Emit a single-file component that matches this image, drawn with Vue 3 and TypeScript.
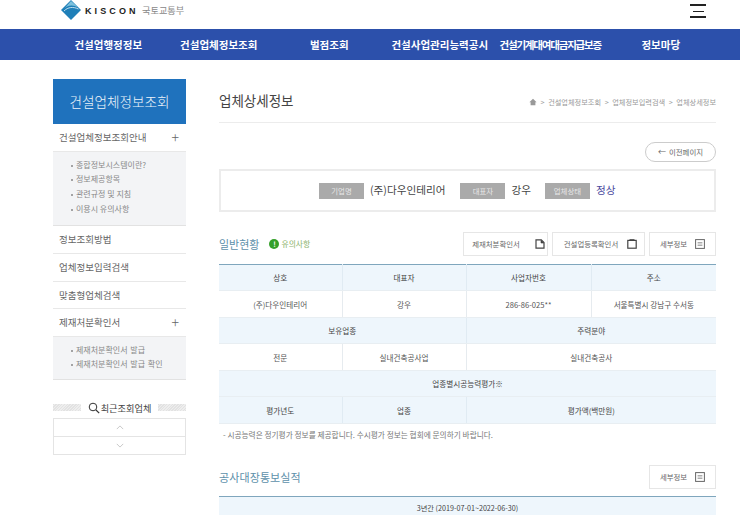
<script setup lang="ts">
const navItems: string[] = ['건설업행정정보', '건설업체정보조회', '벌점조회', '건설사업관리능력공시', '건설기계대여대금지급보증', '정보마당']
const guide: string[] = ['종합정보시스템이란?', '정보제공항목', '관련규정 및 지침', '이용시 유의사항']
const cert: string[] = ['제재처분확인서 발급', '제재처분확인서 발급 확인']
</script>

<template>
  <div class="page">
    <header class="top">
      <div class="brand">
        <svg class="logo" viewBox="0 0 20 20" width="20" height="20">
          <path d="M10 0 L20 10 L10 20 L0 10 Z" fill="#1f7fb8" />
          <path d="M2.5 9.5 C6 5 12 4 17 7.5 L14 4.5 L10 1 Z" fill="#7cc0dc" />
          <path d="M3 11 C7 7 12 6.5 17.5 9" stroke="#e8f5fa" stroke-width="0.8" fill="none" />
        </svg>
        <span class="kiscon">KISCON</span>
        <span class="ministry">국토교통부</span>
      </div>
      <div class="burger"><i></i><i class="short"></i><i></i></div>
    </header>

    <nav class="gnb">
      <a v-for="n in navItems" :key="n">{{ n }}</a>
    </nav>

    <div class="body">
      <aside class="side">
        <h2 class="side-title">건설업체정보조회</h2>
        <div class="m-row">건설업체정보조회안내<span class="plus">+</span></div>
        <ul class="sub sub1"><li v-for="g in guide" :key="g">{{ g }}</li></ul>
        <div class="m-row">정보조회방법</div>
        <div class="m-row">업체정보입력검색</div>
        <div class="m-row">맞춤형업체검색</div>
        <div class="m-row">제재처분확인서<span class="plus">+</span></div>
        <ul class="sub sub2"><li v-for="c in cert" :key="c">{{ c }}</li></ul>

        <div class="recent">
          <span class="hatch"></span>
          <svg viewBox="0 0 12 12" width="12" height="12" class="mag">
            <circle cx="5" cy="5" r="3.8" fill="none" stroke="#333" stroke-width="1" />
            <path d="M8 8 L11.2 11.2" stroke="#333" stroke-width="1.2" />
          </svg>
          <span class="recent-t">최근조회업체</span>
          <span class="hatch"></span>
        </div>
        <div class="pager">
          <svg viewBox="0 0 10 6" width="8" height="5"><path d="M1 5 L5 1 L9 5" fill="none" stroke="#aaa" stroke-width="0.8" /></svg>
        </div>
        <div class="pager second">
          <svg viewBox="0 0 10 6" width="8" height="5"><path d="M1 1 L5 5 L9 1" fill="none" stroke="#aaa" stroke-width="0.8" /></svg>
        </div>
      </aside>

      <main class="main">
        <div class="head">
          <h1>업체상세정보</h1>
          <div class="crumb">
            <svg viewBox="0 0 10 10" width="8" height="8"><path d="M5 1 L9.5 5.4 H8 V9 H2 V5.4 H0.5 Z" fill="#999" /></svg>
            <span>&gt;</span><span>건설업체정보조회</span><span>&gt;</span><span>업체정보입력검색</span><span>&gt;</span><span>업체상세정보</span>
          </div>
        </div>

        <div class="back-row"><a class="back"><span class="arrow">←</span> 이전페이지</a></div>

        <div class="summary">
          <span class="tag">기업명</span><b class="val v1">(주)다우인테리어</b>
          <span class="tag">대표자</span><b class="val v2">강우</b>
          <span class="tag">업체상태</span><b class="val ok">정상</b>
        </div>

        <div class="sec sec1">
          <h3>일반현황</h3>
          <span class="notice"><i>!</i>유의사항</span>
          <div class="btns">
            <a class="btn b1">제재처분확인서
              <svg viewBox="0 0 10 10" width="10" height="10"><path d="M1 .8 H6.3 L9 3.5 V9.2 H1 Z" fill="none" stroke="#444" stroke-width="1.2" /><path d="M6 1 V4 H9" fill="#444" stroke="#444" stroke-width=".6" /></svg>
            </a>
            <a class="btn b2">건설업등록확인서
              <svg viewBox="0 0 10 10" width="10" height="10"><rect x=".8" y="1.4" width="8.4" height="7.8" fill="none" stroke="#444" stroke-width="1.2" /><path d="M2.5 1 H7.5" stroke="#444" stroke-width="1.6" /></svg>
            </a>
            <a class="btn b3">세부정보
              <svg viewBox="0 0 10 10" width="10" height="10"><rect x=".6" y=".6" width="8.8" height="8.8" fill="none" stroke="#666" /><path d="M2.6 3.5 H7.4 M2.6 5 H7.4 M2.6 6.5 H7.4" stroke="#888" stroke-width=".7" /></svg>
            </a>
          </div>
        </div>

        <table class="grid">
          <colgroup><col class="c1" /><col class="c2" /><col class="c3" /><col class="c4" /></colgroup>
          <tbody>
            <tr><th>상호</th><th>대표자</th><th>사업자번호</th><th>주소</th></tr>
            <tr><td>(주)다우인테리어</td><td>강우</td><td>286-86-025**</td><td>서울특별시 강남구 수서동</td></tr>
            <tr><th colspan="2">보유업종</th><th colspan="2">주력분야</th></tr>
            <tr><td>전문</td><td>실내건축공사업</td><td colspan="2">실내건축공사</td></tr>
            <tr><th colspan="4">업종별시공능력평가※</th></tr>
            <tr><th>평가년도</th><th>업종</th><th colspan="2">평가액(백만원)</th></tr>
          </tbody>
        </table>
        <p class="note">- 시공능력은 정기평가 정보를 제공합니다. 수시평가 정보는 협회에 문의하기 바랍니다.</p>

        <div class="sec sec2">
          <h3 class="wide">공사대장통보실적</h3>
          <div class="btns">
            <a class="btn b3">세부정보
              <svg viewBox="0 0 10 10" width="10" height="10"><rect x=".6" y=".6" width="8.8" height="8.8" fill="none" stroke="#666" /><path d="M2.6 3.5 H7.4 M2.6 5 H7.4 M2.6 6.5 H7.4" stroke="#888" stroke-width=".7" /></svg>
            </a>
          </div>
        </div>
        <table class="grid last">
          <tbody><tr><th>3년간 (2019-07-01~2022-06-30)</th></tr></tbody>
        </table>
      </main>
    </div>
  </div>
</template>

<style>
html, body { margin: 0; overflow: hidden; background: #fff; }
</style>

<style scoped>
.page {
  width: 740px;
  height: 515px;
  overflow: hidden;
  font-family: "Noto Sans CJK KR", "Noto Sans", sans-serif;
  color: #555;
  background: #fff;
}
.top {
  height: 29px;
  padding: 0 34px 0 61px;
  display: flex;
  justify-content: space-between;
}
.brand { display: flex; align-items: center; height: 20px; }
.logo { margin-right: 4px; }
.kiscon {
  font-family: "Liberation Sans", sans-serif;
  font-weight: 700;
  font-size: 9px;
  letter-spacing: 3.1px;
  color: #222;
  width: 57px;
  padding-top: 2px;
}
.ministry { font-size: 9.2px; color: #888; line-height: 1; padding-top: 2px; }
.burger { display: flex; flex-direction: column; align-items: center; width: 16px; padding-top: 4px; gap: 4px; }
.burger i { display: block; width: 16px; height: 2px; background: #222; }
.burger i.short { width: 11px; height: 1px; margin: .5px 0; }
.gnb {
  height: 31px;
  background: #2c50ab;
  padding: 0 24px 0 53px;
  display: grid;
  grid-template-columns: repeat(6, minmax(0, 1fr));
  align-items: center;
}
.gnb a {
  color: #fff;
  font-size: 10.5px;
  font-weight: 700;
  text-align: center;
  white-space: nowrap;
}
.gnb a:nth-child(5) { letter-spacing: -1.2px; }
.body { display: flex; padding: 19px 24px 0 53px; gap: 33px; }
.side { width: 133px; flex: none; }
.side-title {
  margin: 0;
  height: 45px;
  line-height: 44px;
  background: #1f72bd;
  color: #eef4fa;
  font-size: 13.6px;
  font-weight: 300;
  text-align: center;
}
.m-row {
  height: 26.6px;
  line-height: 27px;
  padding: 0 6px;
  font-size: 9.5px;
  color: #666;
  border-bottom: 1px solid #e8e8e8;
  display: flex;
  justify-content: space-between;
}
.plus { font-size: 14px; font-weight: 300; color: #666; padding-right: 1px; line-height: 26px; }
.sub {
  list-style: none;
  margin: 0;
  background: #f3f4f6;
  border-bottom: 1px solid #e2e2e2;
  font-size: 8px;
  color: #888;
}
.sub li { position: relative; line-height: 14.7px; white-space: nowrap; }
.sub li::before {
  content: "";
  position: absolute;
  left: -5px;
  top: 7px;
  width: 2px;
  height: 2px;
  background: #888;
  border-radius: 50%;
}
.sub1 { padding: 6px 0 9px 23px; }
.sub2 { padding: 6px 0 8px 23px; word-spacing: 1px; }
.sub2 li { line-height: 14.2px; }
.recent { display: flex; align-items: center; margin-top: 20px; height: 15px; }
.hatch {
  flex: 1;
  height: 7px;
  background: repeating-linear-gradient(135deg, #e2e2e2 0 1px, #eeeeee 1px 2px);
}
.mag { margin: 0 1px 0 7px; }
.recent-t { font-size: 9.2px; color: #444; margin-right: 7px; }
.pager {
  height: 17px;
  margin-top: 3px;
  border: 1px solid #e4e4e4;
  display: flex;
  align-items: center;
  justify-content: center;
}
.pager.second { margin-top: 0; border-top: none; }
.main { width: 497px; flex: none; }
.head {
  height: 43.6px;
  box-sizing: border-box;
  border-bottom: 1px solid #ececec;
  display: flex;
  justify-content: space-between;
  align-items: center;
  padding-bottom: 1px;
}
.head h1 { margin: 0; font-size: 13.5px; font-weight: 400; color: #444; }
.crumb {
  font-size: 7.2px;
  color: #999;
  display: flex;
  align-items: center;
  gap: 3.6px;
  padding-top: 5px;
}
.back-row { display: flex; justify-content: flex-end; padding-top: 19.4px; }
.back {
  width: 71px;
  height: 20px;
  box-sizing: border-box;
  border: 1px solid #ccc;
  border-radius: 10px;
  font-size: 7.4px;
  color: #666;
  display: flex;
  align-items: center;
  justify-content: center;
  gap: 3px;
}
.arrow { font-size: 8px; }
.summary {
  margin-top: 7px;
  height: 43px;
  box-sizing: border-box;
  border: 2px solid #ececec;
  display: flex;
  align-items: center;
  padding-left: 98px;
}
.tag {
  width: 45px;
  height: 16px;
  line-height: 16px;
  background: #aaa;
  color: #e8e8e8;
  font-size: 7.4px;
  text-align: center;
  flex: none;
  margin-top: 2px;
}
.val { font-weight: 400; font-size: 10.6px; color: #444; }
.v1 { margin: -1px 15px 0 6px; }
.v2 { margin: -1px 14px 0 6px; }
.ok { margin: -1px 0 0 6px; color: #4a4a9e; }
.sec { display: flex; align-items: center; }
.sec1 { margin-top: 20px; height: 24px; }
.sec2 { margin-top: 25px; height: 24px; }
.sec h3 { margin: 0; font-size: 11px; font-weight: 400; color: #5d90aa; line-height: 20px; }
.sec h3.wide { font-size: 11px; letter-spacing: .1px; }
.notice {
  display: flex;
  align-items: center;
  gap: 2px;
  margin-left: 10px;
  font-size: 7.8px;
  color: #8bb26a;
}
.notice i {
  width: 10px;
  height: 10px;
  border-radius: 50%;
  background: #35a02a;
  color: #fff;
  font-size: 7px;
  font-style: normal;
  font-weight: 700;
  text-align: center;
  line-height: 10px;
}
.btns { margin-left: auto; display: flex; gap: 4px; }
.btn {
  height: 24px;
  box-sizing: border-box;
  border: 1px solid #e6e6e6;
  font-size: 7.4px;
  color: #666;
  display: flex;
  align-items: center;
  justify-content: center;
  gap: 9px;
  white-space: nowrap;
}
.b1 { width: 85px; gap: 15px; padding-left: 6px; }
.b2 { width: 93px; padding-left: 4px; }
.b3 { width: 67px; gap: 8px; }
.grid {
  width: 497px;
  margin-top: 8px;
  border-collapse: collapse;
  table-layout: fixed;
  border-top: 1px solid #7fa6bd;
  font-size: 7.6px;
  color: #555;
}
.c1 { width: 123px; }
.c2 { width: 124px; }
.c3 { width: 125px; }
.c4 { width: 125px; }
.grid th, .grid td {
  height: 26.5px;
  padding: 0;
  text-align: center;
  font-weight: 400;
  border-bottom: 1px solid #e8eef2;
  border-right: 1px solid #e6ebef;
  box-sizing: border-box;
}
.grid th { background: #eef6fc; color: #444; border-right-color: #e0ebf3; }
.grid th:last-child, .grid td:last-child { border-right: none; }
.grid.last { margin-top: 7.5px; font-size: 7.2px; }
.grid.last th { height: 24px; line-height: 1; }
.note { margin: 5px 0 0; padding-left: 4px; font-size: 7.7px; color: #777; line-height: 11px; }
</style>
